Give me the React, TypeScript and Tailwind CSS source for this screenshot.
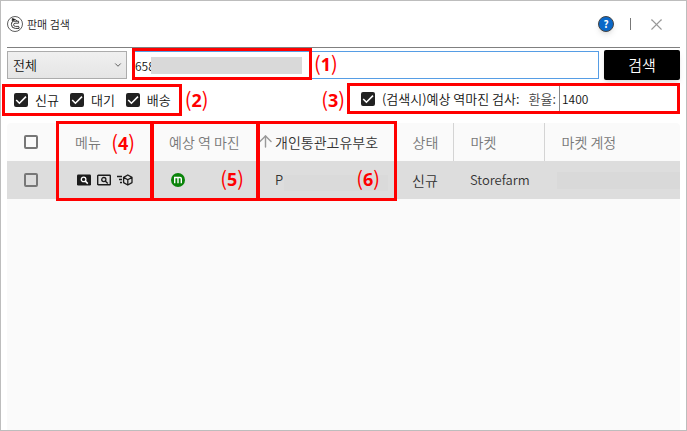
import { ReactNode, useState } from 'react';
import { ArrowUp, ChevronDown, X } from 'lucide-react';
import { twMerge } from 'tailwind-merge';

const filters = ['신규', '대기', '배송'];

// Red callout number, e.g. (1)
const Callout = ({ n, className }: { n: number; className?: string }) => (
    <span className={twMerge("text-[20px] leading-6 font-normal text-[#ff0000] whitespace-nowrap pointer-events-none", className)}>
        (<b className="font-['Noto_Sans'] text-[18px] font-bold">{n}</b>)
    </span>
);

const CheckBox = ({ label, children, defaultChecked }: { label?: string; children?: ReactNode; defaultChecked?: boolean }) => (
    <label className="flex items-center gap-[7px] whitespace-nowrap">
        <span className="grid size-[14px] shrink-0">
            <input
                type="checkbox"
                defaultChecked={defaultChecked}
                aria-label={label}
                className="peer col-start-1 row-start-1 size-[14px] appearance-none rounded-[2px] border-2 border-[#777] checked:border-[#222] checked:bg-[#222]"
            />
            <svg viewBox="0 0 14 14" className="col-start-1 row-start-1 size-[14px] pointer-events-none hidden peer-checked:block" fill="none" stroke="#fff" strokeWidth="1.6">
                <path d="M2.2 7 5.4 10.2 12 3.6" />
            </svg>
        </span>
        {children}
    </label>
);

const Logo = () => (
    <svg viewBox="0 0 16 16" className="size-4" fill="none" stroke="#333">
        <circle cx="8" cy="8" r="7.5" strokeWidth="0.8" />
        <path d="M11.6 5.2H6.6Q4.4 5.4 4.4 8.4 4.4 12.4 8.4 12.4H12V10.8" strokeWidth="1" />
        <path d="M11.6 5.2V7.2H8Q6.6 7.4 6.6 8.8 6.8 10.4 8.4 10.4H12" strokeWidth="0.9" />
        <path d="M5.2 2.2 8.4 3.6 5.2 5.2Z" fill="#111" strokeWidth="0.6" />
        <path d="M8.4 3.6 10.2 5" strokeWidth="0.9" />
    </svg>
);

const PreviewFilledIcon = () => (
    <svg viewBox="0 0 14 12" className="h-3 w-[14px]" fill="none">
        <rect x="0" y="0.5" width="14" height="11" rx="1.2" fill="#1c1c1c" />
        <circle cx="6.6" cy="5.4" r="2.3" stroke="#fff" strokeWidth="1.3" />
        <path d="M8.1 6.9 10.8 9.6" stroke="#fff" strokeWidth="1.5" />
    </svg>
);

const PreviewIcon = () => (
    <svg viewBox="0 0 14 12" className="h-3 w-[14px]" fill="none" stroke="#1c1c1c">
        <rect x="0.7" y="1.2" width="12.6" height="9.6" rx="0.6" strokeWidth="1.4" />
        <circle cx="6.8" cy="5.6" r="2.1" strokeWidth="1.3" />
        <path d="M8.2 7 10.8 9.6" strokeWidth="1.4" />
    </svg>
);

const DeliveryIcon = () => (
    <svg viewBox="0 0 16 12" className="h-3 w-4" fill="none" stroke="#1c1c1c" strokeWidth="1.3" strokeLinejoin="round">
        <path d="M0 2.5H5M2 5.5H5M3 8.5H5" />
        <path d="M10.8 1 15 3.4V8.6L10.8 11 6.6 8.6V3.4ZM6.6 3.4 10.8 5.8 15 3.4M10.8 5.8V11" />
    </svg>
);

const MarginIcon = () => (
    <svg viewBox="0 0 14 14" className="size-[14px]" fill="none">
        <circle cx="7" cy="7" r="7" fill="#0a840a" />
        <path d="M3.7 10.2V4.5H9Q10.3 4.5 10.3 5.8V10.2M7 4.5V10.2" stroke="#fff" strokeWidth="1.4" />
    </svg>
);

// Frame drawn around a column heading and the row under it
const ColumnFrame = () => (
    <span className="absolute -top-[2px] -left-[2px] -right-[2px] z-10 h-[80px] border-[3px] border-[#ff0000] pointer-events-none" />
);

export default function App() {
    const [keyword, setKeyword] = useState('658');
    const [rate, setRate] = useState('1400');

    return (
        <div className="flex min-h-screen flex-col border border-[#bdbdbd] bg-white font-['Noto_Sans_CJK_KR',sans-serif] text-[13px] font-[350] text-[#111]">
            <header className="mx-[6px] flex h-[47px] items-center border-b border-[#808080]">
                <Logo />
                <h1 className="ml-1 text-[11px] text-[#222]">판매 검색</h1>
                <div className="mr-[14px] ml-auto flex items-center">
                    <button aria-label="도움말" className="flex size-4 items-center justify-center rounded-full border border-[#444] bg-[#0a68c8] text-[10px] leading-none font-bold text-white shadow-md">?</button>
                    <span className="ml-4 h-3 w-px bg-[#777]" />
                    <button aria-label="닫기" className="ml-4 text-[#999]">
                        <X size={19} strokeWidth={1.4} />
                    </button>
                </div>
            </header>

            <div className="mx-[6px] mt-[2px] flex h-[30px] items-center">
                <div className="relative h-7 w-[120px]">
                    <select aria-label="검색 구분" className="size-full appearance-none border border-[#acacac] bg-linear-to-b from-[#f0f0f0] to-[#e5e5e5] pl-[5px]">
                        <option>전체</option>
                    </select>
                    <ChevronDown size={10} className="pointer-events-none absolute top-[9px] right-[4px] text-[#444]" />
                </div>
                <div className="relative ml-[5px] h-7 flex-1">
                    <input
                        aria-label="검색어"
                        value={keyword}
                        onChange={(e) => setKeyword(e.target.value)}
                        className="size-full border border-[#569de5] bg-white pl-[2px] text-[12px] outline-none"
                    />
                    <span className="pointer-events-none absolute top-[6px] left-[19px] h-[17px] w-[151px] bg-[#d9d9d9]" />
                    <span className="pointer-events-none absolute -top-[3px] left-0 h-[32px] w-[180px] border-[3px] border-[#ff0000]" />
                    <Callout n={1} className="absolute top-0 left-[182px]" />
                </div>
                <button className="ml-[5px] h-[30px] w-[76px] rounded-[2px] bg-black text-[15px] text-white shadow-md">검색</button>
            </div>

            <div className="flex items-start pt-[3px] pr-[6px] pb-[7px] pl-px">
                <div className="mt-px flex h-8 items-center gap-[11px] border-[3px] border-[#ff0000] pr-2 pl-[9px]">
                    {filters.map((f) => (
                        <CheckBox key={f} defaultChecked>{f}</CheckBox>
                    ))}
                </div>
                <Callout n={2} className="mt-1 ml-[3px]" />
                <Callout n={3} className="mt-1 mr-[2px] ml-auto" />
                <div className="flex h-[31px] w-[333px] items-center border-[3px] border-[#ff0000] pl-[11px]">
                    <CheckBox defaultChecked>(검색시)예상 역마진 검사:</CheckBox>
                    <label htmlFor="rate" className="ml-auto pr-[3px] text-[#444]">환율:</label>
                    <input
                        id="rate"
                        value={rate}
                        onChange={(e) => setRate(e.target.value)}
                        className="h-full w-[118px] border-l border-[#888] bg-white pl-[2px] text-[12px] outline-none"
                    />
                </div>
            </div>

            <main className="mx-[6px] flex-1 rounded-t-[4px] bg-[#fafafa]">
                <table className="w-full table-fixed text-left text-[14px]">
                    <colgroup>
                        <col className="w-[51px]" />
                        <col className="w-[94px]" />
                        <col className="w-[106px]" />
                        <col className="w-[137px]" />
                        <col className="w-[58px]" />
                        <col className="w-[91px]" />
                        <col />
                    </colgroup>
                    <thead className="text-[#777]">
                        <tr className="h-[38px] *:p-0 *:pl-[17px] *:font-[350] *:whitespace-nowrap">
                            <th><CheckBox label="전체 선택" /></th>
                            <th className="relative">
                                메뉴
                                <Callout n={4} className="absolute top-[7px] right-[17px]" />
                                <ColumnFrame />
                            </th>
                            <th className="relative">예상 역 마진<ColumnFrame /></th>
                            <th className="relative border-r border-[#d4d4d4] text-[#333]">
                                <ArrowUp size={19} strokeWidth={1.8} className="absolute top-[9px] -left-[2px] text-[#999]" />
                                개인통관고유부호
                                <ColumnFrame />
                            </th>
                            <th className="border-r border-[#d4d4d4]">상태</th>
                            <th className="border-r border-[#d4d4d4]">마켓</th>
                            <th>마켓 계정</th>
                        </tr>
                    </thead>
                    <tbody className="text-[#333]">
                        <tr className="h-[38px] bg-[#dddddd] *:p-0 *:pl-[17px] *:whitespace-nowrap">
                            <td><CheckBox label="행 선택" /></td>
                            <td>
                                <div className="flex items-center gap-[6px] pl-[2px]">
                                    <button aria-label="상세"><PreviewFilledIcon /></button>
                                    <button aria-label="미리보기"><PreviewIcon /></button>
                                    <button aria-label="배송"><DeliveryIcon /></button>
                                </div>
                            </td>
                            <td className="relative">
                                <span className="flex pl-[2px]"><MarginIcon /></span>
                                <Callout n={5} className="absolute top-[5px] right-[14px]" />
                            </td>
                            <td className="relative text-[13px]">
                                P
                                <span className="absolute top-[14px] left-[26px] h-4 w-[104px] bg-[#dadada]" />
                                <Callout n={6} className="absolute top-[5px] right-[15px]" />
                            </td>
                            <td>신규</td>
                            <td className="text-[13px]">Storefarm</td>
                            <td><div className="-ml-1 h-[17px] bg-[#d9d9d9]" /></td>
                        </tr>
                    </tbody>
                </table>
            </main>
        </div>
    );
}
